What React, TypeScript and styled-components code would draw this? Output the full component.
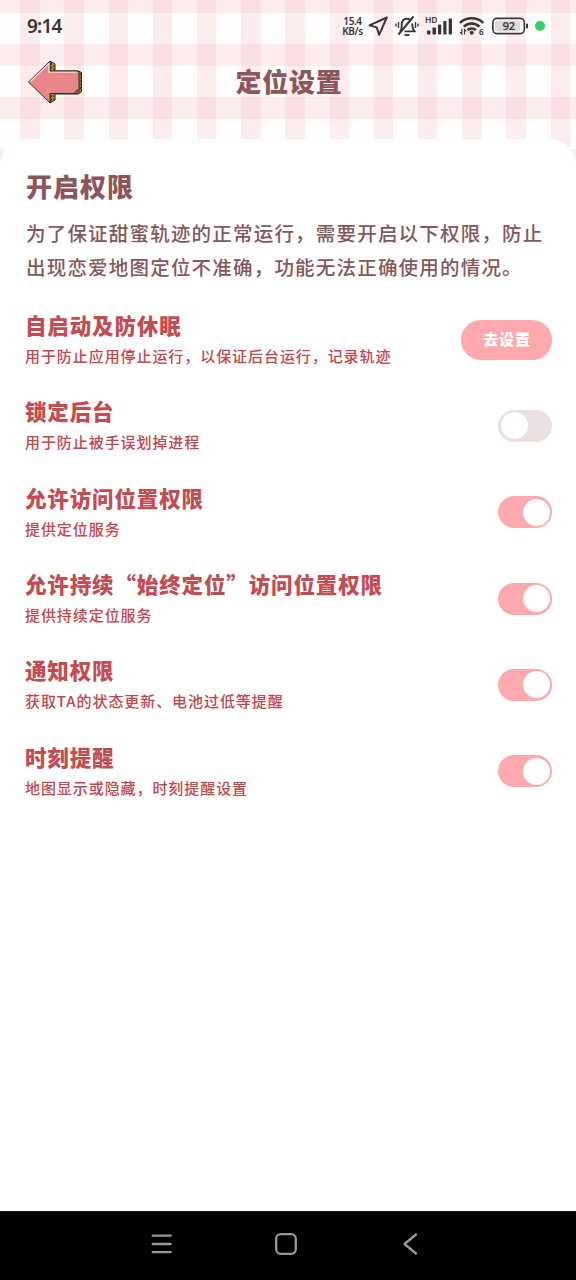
import React, { useState } from 'react'
import styled, { createGlobalStyle } from 'styled-components'

const GlobalStyle = createGlobalStyle`
  * {
    box-sizing: border-box;
  }
  body {
    margin: 0;
    background: #fff;
    font-family: 'Noto Sans CJK SC', sans-serif;
  }
`

const Screen = styled.div`
  display: flex;
  flex-direction: column;
  width: 576px;
  height: 1280px;
  overflow: hidden;
  background-color: #fffefe;
  background-image: repeating-linear-gradient(
      90deg,
      rgba(246, 178, 180, 0.23) 0 19.4px,
      transparent 19.4px 44.2px
    ),
    repeating-linear-gradient(180deg, rgba(246, 178, 180, 0.23) 0 22.5px, transparent 22.5px 52.8px);
  background-size: 618.8px 200px, 620px 211.2px;
  background-position: -24px 0, 0 -9px;
  background-repeat: repeat-x;
`

const StatusBar = styled.div`
  display: flex;
  align-items: center;
  height: 52px;
  padding: 0 31px 0 27px;
  color: #3a3435;
  font-family: 'Noto Sans', sans-serif;
`

const Clock = styled.div`
  flex: 1;
  padding-bottom: 1px;
  font-size: 19px;
  font-weight: 600;
  letter-spacing: -0.8px;
  line-height: 50px;
`

const NetSpeed = styled.div`
  display: flex;
  flex-direction: column;
  align-items: center;
  width: 23px;
  margin-right: 4px;
  font-size: 10px;
  font-weight: 600;
  letter-spacing: -0.4px;
  line-height: 10px;
  white-space: nowrap;
`

const StatusIcon = styled.svg<{ $gap: number }>`
  flex: none;
  margin-right: ${({ $gap }) => $gap}px;
  overflow: visible;
`

const RecordingDot = styled.div`
  width: 10px;
  height: 10px;
  border-radius: 50%;
  background: #33d160;
`

const Header = styled.header`
  display: grid;
  grid-template-columns: 120px 1fr 118px;
  align-items: center;
  height: 87px;
  padding-bottom: 27px;
`

const BackButton = styled.button`
  width: 56px;
  height: 46px;
  margin-left: 27px;
  padding: 0;
  border: 0;
  background: none;
  cursor: pointer;

  svg {
    display: block;
  }
`

const PageTitle = styled.h1`
  margin: 0;
  padding-bottom: 2px;
  color: #8d5559;
  font-size: 26px;
  font-weight: 900;
  letter-spacing: 0.7px;
  line-height: 40px;
  text-align: center;
`

const Panel = styled.main`
  flex: 1;
  padding: 27px 24px 0 25px;
  border-radius: 26px 26px 0 0;
  background: #fff;
`

const SectionTitle = styled.h2`
  margin: 0 0 0 1px;
  color: #8d5559;
  font-size: 26px;
  font-weight: 900;
  letter-spacing: 1px;
  line-height: 39px;
`

const Intro = styled.p`
  margin: 11px 0 12.5px 1px;
  color: #85575a;
  font-size: 19.5px;
  font-weight: 500;
  letter-spacing: 1.2px;
  line-height: 34px;
  white-space: nowrap;
`

const Row = styled.div`
  display: flex;
  align-items: center;
  justify-content: space-between;
  height: 86.3px;
`

const RowText = styled.div`
  padding-bottom: 1px;
  white-space: nowrap;
`

const RowTitle = styled.div`
  color: #c54b53;
  font-size: 21.5px;
  font-weight: 900;
  letter-spacing: 0.87px;
  line-height: 34px;
`

const RowHint = styled.div`
  color: #c2464e;
  font-size: 15px;
  font-weight: 500;
  letter-spacing: 0.93px;
  line-height: 28px;
`

const SetupButton = styled.button`
  width: 91px;
  height: 40px;
  padding: 0 0 2px 1px;
  border: 0;
  border-radius: 20px;
  background: #ffa8ad;
  color: #fff;
  font-family: inherit;
  font-size: 15px;
  font-weight: 900;
  letter-spacing: 0.8px;
  line-height: 38px;
  cursor: pointer;
`

const Switch = styled.button<{ $on: boolean }>`
  display: flex;
  align-items: center;
  justify-content: ${({ $on }) => ($on ? 'flex-end' : 'flex-start')};
  width: 54px;
  height: 32px;
  padding: 0 2.5px;
  border: 0;
  border-radius: 16px;
  background: ${({ $on }) => ($on ? '#ffa8ad' : '#ecdfe0')};
  cursor: pointer;
`

const Knob = styled.span`
  width: 27px;
  height: 27px;
  border-radius: 50%;
  background: #fff;
`

const NavBar = styled.nav`
  display: flex;
  justify-content: space-between;
  height: 69px;
  padding: 20px 154px 0 150px;
  border-top: 1px solid #16191a;
  background: #000;
`

interface Permission {
  title: string
  hint: string
  enabled?: boolean
}

const PERMISSIONS: Permission[] = [
  { title: '自启动及防休眠', hint: '用于防止应用停止运行，以保证后台运行，记录轨迹' },
  { title: '锁定后台', hint: '用于防止被手误划掉进程', enabled: false },
  { title: '允许访问位置权限', hint: '提供定位服务', enabled: true },
  { title: '允许持续“始终定位”访问位置权限', hint: '提供持续定位服务', enabled: true },
  { title: '通知权限', hint: '获取TA的状态更新、电池过低等提醒', enabled: true },
  { title: '时刻提醒', hint: '地图显示或隐藏，时刻提醒设置', enabled: true }
]

const BackArrow = () => (
  <svg width="56" height="46" viewBox="0 0 56 46">
    <path d="M23 2l5 3v7h23.500l3 1.500v19l-3 2.500H28v6l-5 3z" fill="#a8922c" stroke="#2e2422" strokeWidth="1" />
    <path d="M24.500 4v8M27 6v6M24.500 36v6M27 36v5M53.200 14v18" stroke="#403414" strokeWidth="1.200" strokeDasharray="2 1.500" />
    <path d="M1.500 23L23 2v10h28l1 1.500V33l-1.500 1.500H23V44z" fill="#e98788" stroke="#33272a" strokeWidth="1" strokeLinejoin="round" />
    <path d="M3.500 22.500L22 4.500V13.200h28" fill="none" stroke="#fbe3e4" strokeWidth="1.100" />
    <path d="M46.500 33.500l4.500-4v4z" fill="#8d3b45" />
  </svg>
)

const StatusIcons = () => (
  <>
    <StatusIcon $gap={6} width="21" height="22" viewBox="0 0 21 22">
      <path d="M18.800 2.500L1.500 10.400l7.200 2 2.400 7.400z" fill="none" stroke="#3a3435" strokeWidth="2" strokeLinejoin="round" />
    </StatusIcon>
    <StatusIcon $gap={6} width="24" height="22" viewBox="0 0 24 22" fill="none" stroke="#3a3435">
      <path d="M5 16.500c2-2 1.700-3.500 1.700-6.500 0-3.800 2-6.200 5.300-6.200 1.400 0 2.400.4 3.200 1M17.200 8.500c.2 3 0 5.500 2.300 7.900H9.500" strokeWidth="1.900" />
      <path d="M18.500 1.500L3.500 19.500" strokeWidth="2" />
      <path d="M9.500 20h5" strokeWidth="1.800" />
      <path d="M3.500 7v6M1 8.500v3M20.500 7v6M23 8.500v3" strokeWidth="1.400" />
    </StatusIcon>
    <StatusIcon $gap={6} width="28" height="22" viewBox="0 0 28 22" fill="#3a3435">
      <text x="0" y="8" fontFamily="Noto Sans" fontSize="8.500" fontWeight="600" textLength="12.500">
        HD
      </text>
      <rect x="2" y="15.500" width="3.500" height="4" rx=".7" />
      <rect x="7.500" y="12.500" width="3.500" height="7" rx=".7" />
      <rect x="13" y="9.500" width="3.200" height="10" rx=".7" />
      <rect x="18.300" y="6" width="3.200" height="13.500" rx=".7" />
      <rect x="23.700" y="3.500" width="3.300" height="16" rx=".7" />
    </StatusIcon>
    <StatusIcon $gap={8} width="25" height="22" viewBox="0 0 25 22" fill="none" stroke="#3a3435">
      <path d="M1 7.800C7.500 1.800 18 1.800 24.200 7.800M4.800 11.600c4.500-4.200 11.400-4.200 15.700 0M8.500 15.200c2.400-2.200 6-2.200 8.300 0" strokeWidth="2.500" />
      <circle cx="12.700" cy="17.800" r="2" fill="#3a3435" stroke="none" />
      <path d="M2.800 14v5l-1.800-1.800M5.500 19.500v-5l1.800 1.800" strokeWidth="1.100" />
      <text x="20" y="20.300" fontFamily="Noto Sans" fontSize="8" fontWeight="600" fill="#3a3435" stroke="none">
        6
      </text>
    </StatusIcon>
    <StatusIcon $gap={7} width="36" height="18" viewBox="0 0 36 18">
      <rect x=".9" y="1.400" width="31.400" height="15.200" rx="4" fill="#fff" stroke="#3a3435" strokeWidth="1.600" />
      <rect x="3" y="3.500" width="25" height="11" rx="2" fill="#dedada" />
      <rect x="34" y="6.500" width="2" height="5" rx=".8" fill="#3a3435" />
      <text x="16.500" y="13.200" fontFamily="Noto Sans" fontSize="11.500" fontWeight="600" letterSpacing="-.7" fill="#3a3435" textAnchor="middle">
        92
      </text>
    </StatusIcon>
  </>
)

const PermissionRow = ({ permission }: { permission: Permission }) => {
  const [on, setOn] = useState(permission.enabled)

  return (
    <Row>
      <RowText>
        <RowTitle>{permission.title}</RowTitle>
        <RowHint>{permission.hint}</RowHint>
      </RowText>
      {on === undefined ? (
        <SetupButton>去设置</SetupButton>
      ) : (
        <Switch $on={on} role="switch" aria-checked={on} onClick={() => setOn(!on)}>
          <Knob />
        </Switch>
      )}
    </Row>
  )
}

const App = () => (
  <>
    <GlobalStyle />
    <Screen>
      <StatusBar>
        <Clock>9:14</Clock>
        <NetSpeed>
          <span>15.4</span>
          <span>KB/s</span>
        </NetSpeed>
        <StatusIcons />
        <RecordingDot />
      </StatusBar>
      <Header>
        <BackButton>
          <BackArrow />
        </BackButton>
        <PageTitle>定位设置</PageTitle>
      </Header>
      <Panel>
        <SectionTitle>开启权限</SectionTitle>
        <Intro>
          为了保证甜蜜轨迹的正常运行，需要开启以下权限，防止
          <br />
          出现恋爱地图定位不准确，功能无法正确使用的情况。
        </Intro>
        {PERMISSIONS.map((permission) => (
          <PermissionRow key={permission.title} permission={permission} />
        ))}
      </Panel>
      <NavBar>
        <svg width="24" height="24" viewBox="0 0 24 24" stroke="#999" strokeWidth="2.300" strokeLinecap="round">
          <path d="M2.700 3.700h18M2.700 12h18M2.700 20.200h18" />
        </svg>
        <svg width="24" height="24" viewBox="0 0 24 24" fill="none" stroke="#999" strokeWidth="2.300">
          <rect x="2.200" y="2.200" width="19.600" height="19.600" rx="4.500" />
        </svg>
        <svg width="24" height="24" viewBox="0 0 24 24" fill="none" stroke="#999" strokeWidth="2.300" strokeLinecap="round" strokeLinejoin="round">
          <path d="M18 2.500L6.500 12 18 21.500" />
        </svg>
      </NavBar>
    </Screen>
  </>
)

export default App
